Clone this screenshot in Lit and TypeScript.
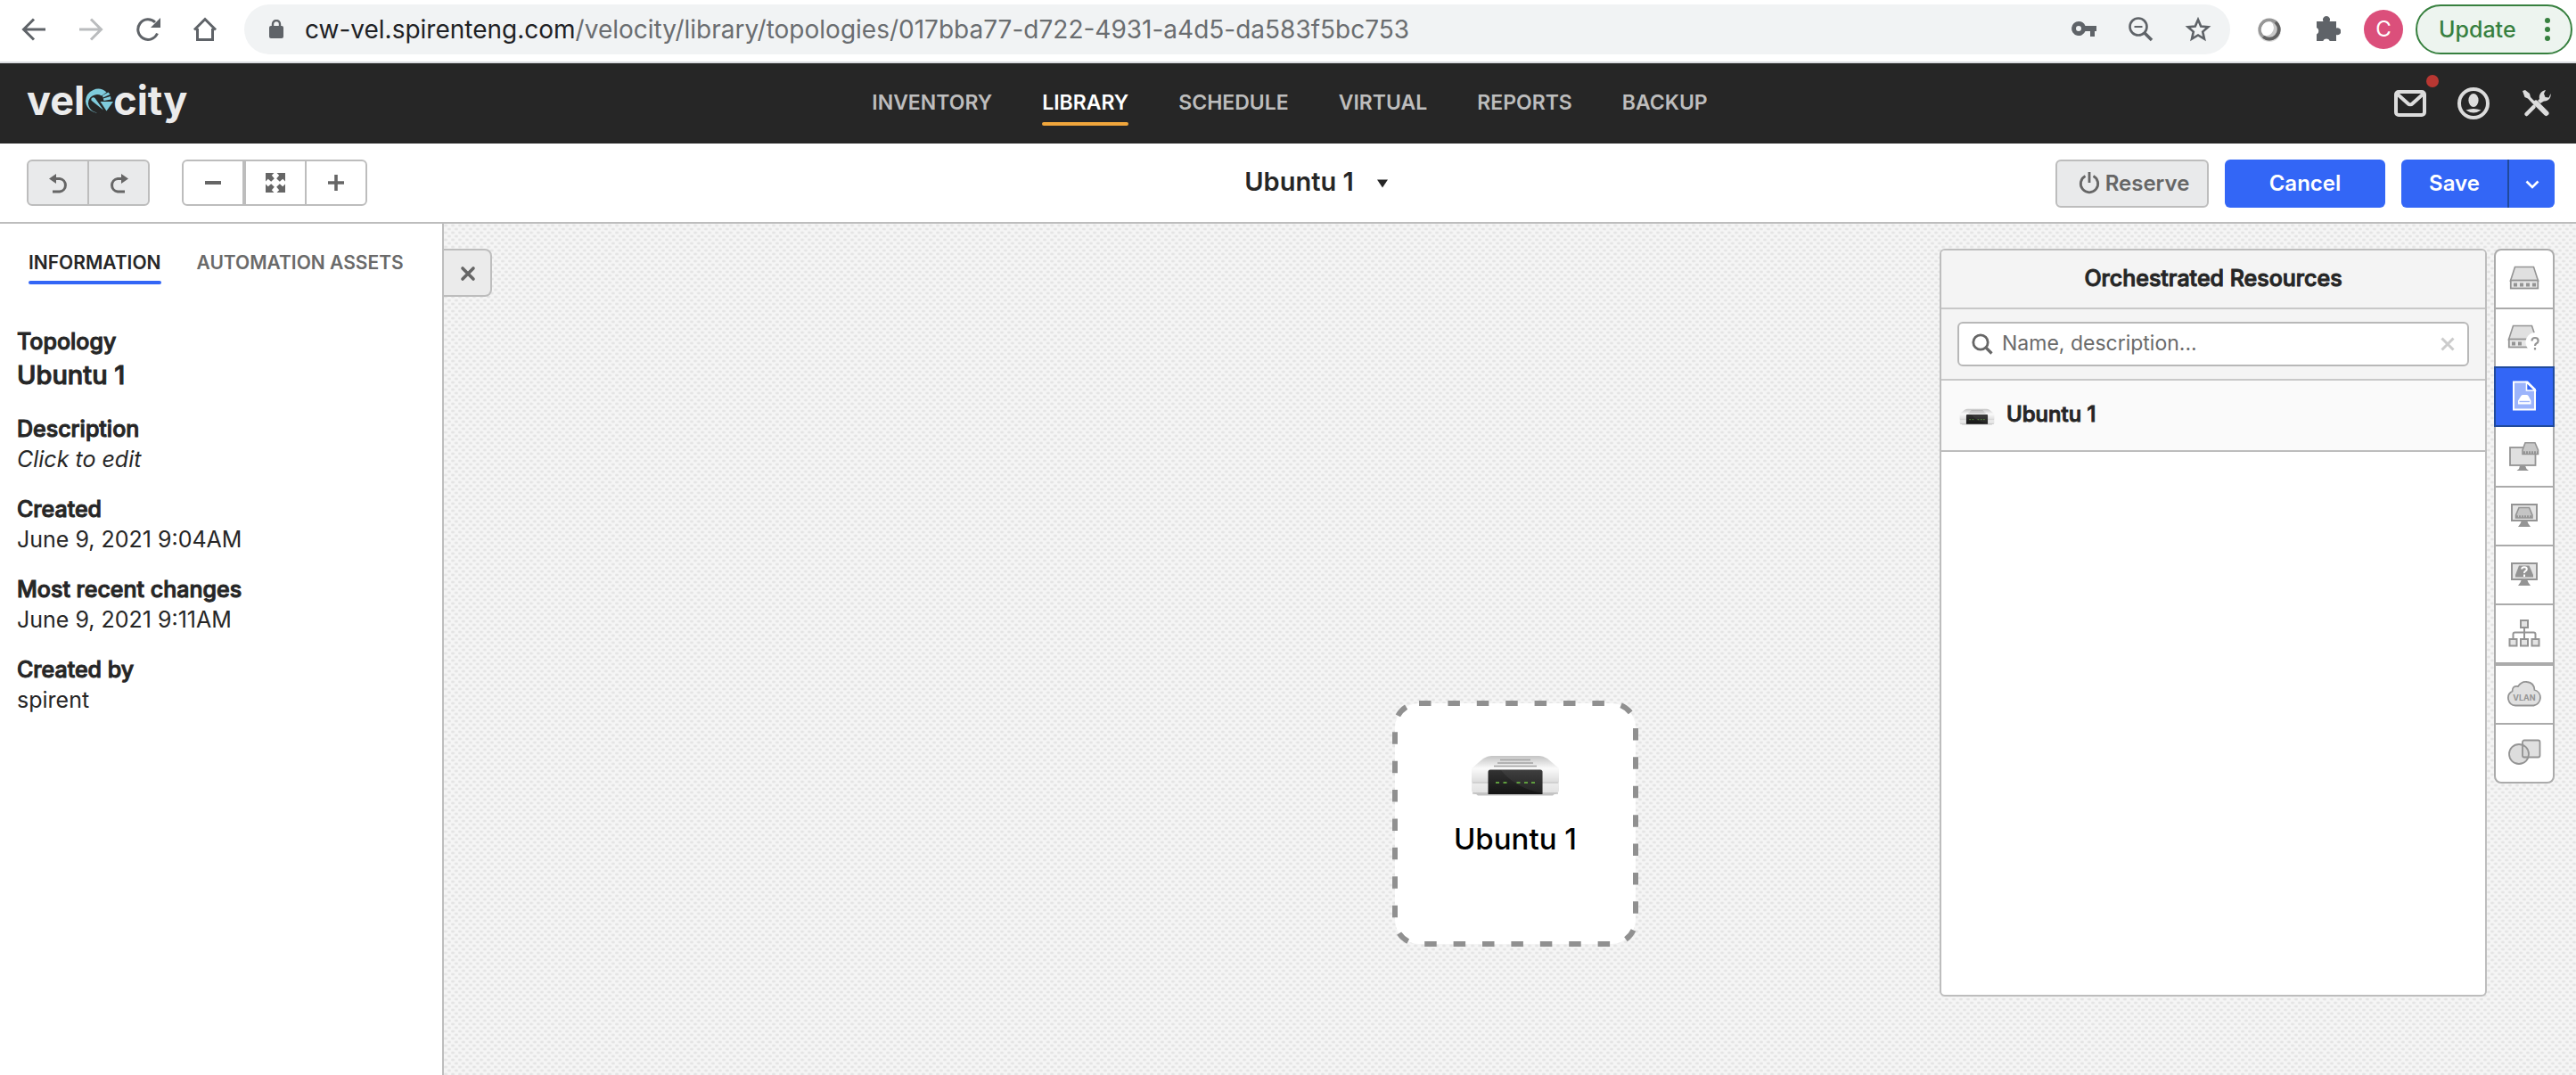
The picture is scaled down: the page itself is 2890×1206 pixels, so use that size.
import { LitElement, html, css, svg, TemplateResult } from "lit";
import { customElement, property, state } from "lit/decorators.js";
import { classMap } from "lit/directives/class-map.js";

const icon = (w: number, h: number, body: unknown) =>
  html`<svg width=${w} height=${h} viewBox="0 0 ${w} ${h}" fill="none" aria-hidden="true">${body}</svg>`;

const back = icon(28, 28, svg`<path d="M27 14H3M14 2.500L2.500 14 14 25.500" stroke="#5f6368" stroke-width="3"/>`);
const forward = icon(28, 28, svg`<path d="M1 14H25M14 2.500L25.500 14 14 25.500" stroke="#babcbe" stroke-width="3"/>`);
const reload = icon(28, 28, svg`<path d="M24.500 18.500A11.300 11.300 0 1 1 22 6" stroke="#5f6368" stroke-width="3"/><path d="M28 1V12H17z" fill="#5f6368"/>`);
const home = icon(28, 28, svg`<path d="M5.500 13V25.500H22.500V13M2 14.500L14 2.500 26 14.500" stroke="#5f6368" stroke-width="3"/>`);
const lock = icon(16, 22, svg`<rect y="7" width="16" height="14" rx="2" fill="#5f6368"/><path d="M4 8V5a4 4 0 0 1 8 0V8" stroke="#5f6368" stroke-width="2.400"/>`);
const key = icon(30, 30, svg`<path fill-rule="evenodd" fill="#5f6368" d="M9 6a8 8 0 1 0 7.500 11H22v6h5v-6h2v-6H16.500A8 8 0 0 0 9 6zm0 5a3 3 0 1 1 0 6 3 3 0 0 1 0-6z"/>`);
const zoomOut = icon(30, 30, svg`<circle cx="12" cy="12" r="9.500" stroke="#5f6368" stroke-width="2.600"/><path d="M7.500 12h9" stroke="#5f6368" stroke-width="2"/><path d="M18.500 18.500L27 27" stroke="#5f6368" stroke-width="3.600"/>`);
const star = icon(30, 30, svg`<path d="M15 4l3.200 7.500 8.100.700-6.100 5.400 1.800 8L15 21.400 8 25.600l1.800-8-6.100-5.400 8.100-.700z" stroke="#5f6368" stroke-width="2.600"/>`);
const orb = icon(28, 28, svg`<circle cx="14" cy="15" r="13" fill="#ddd"/><circle cx="14" cy="14" r="12.500" fill="#979797"/><path d="M14 26.500a12.500 12.500 0 0 0 8-22.100L6 23.500a12.500 12.500 0 0 0 8 3z" fill="#626262"/><circle cx="14" cy="14" r="8.800" fill="#c9c9c9"/><path d="M7 20A9 9 0 0 1 16 5.500 9 9 0 0 1 9 21z" fill="#fff"/>`);
const puzzle = icon(30, 30, svg`<path fill="#5f6368" d="M3 6h7.500a4 4 0 1 1 7 0H25v7.500a4 4 0 1 1 0 7.500v7h-7.200a4.200 4.200 0 0 0-7.600 0H3v-7.500a4.200 4.200 0 0 0 0-7.500z"/>`);
const dots = icon(6, 28, svg`<circle cx="3" cy="4" r="3" fill="#37803f"/><circle cx="3" cy="14" r="3" fill="#37803f"/><circle cx="3" cy="24" r="3" fill="#37803f"/>`);

const gauge = icon(32, 30, svg`
  <path d="M1 15.500A14 14 0 0 1 24.500 5.500L19 9.500A10 10 0 0 0 4 18.500a11.500 11.500 0 0 0 15 9.500A14 14 0 0 1 1 15.500z" fill="#7fcbdc"/>
  <path d="M20 9L26.500 5.500 28.500 8 20.500 11.500zM20.800 12.600L29 10l.500 3.500-8 1.500z" fill="#7fcbdc"/>
  <path d="M17.500 16H32L24.500 26.500z" fill="#7fcbdc"/>
  <path d="M7.500 12.500a2.600 2.600 0 0 1 4-.500L21 25.500 8.500 15.500a2.300 2.300 0 0 1-1-3z" fill="#7fcbdc"/>`);

const mail = icon(36, 36, svg`<rect x="2" y="5" width="32" height="26" rx="3" stroke="#dcdcdc" stroke-width="4"/><path d="M3 7L15.500 18.300a3.500 3.500 0 0 0 5 0L33 7" stroke="#dcdcdc" stroke-width="4"/>`);
const user = icon(36, 36, svg`<circle cx="18" cy="18" r="16" stroke="#dcdcdc" stroke-width="4"/><ellipse cx="18" cy="14.500" rx="5.600" ry="7.500" fill="#dcdcdc"/><path d="M9.500 25.500Q18 22.500 26.500 25.500 18 31.500 9.500 25.500z" fill="#dcdcdc"/>`);
const tools = icon(36, 36, svg`
  <path d="M2 4l3-1 5 4 1 4 7 7-2.500 2.500-7.500-8-3.500-1.500z" fill="#dcdcdc"/>
  <path d="M17 17.500L28.500 29" stroke="#dcdcdc" stroke-width="6" stroke-linecap="round"/>
  <path d="M14.500 22L6.500 30" stroke="#dcdcdc" stroke-width="4.500" stroke-linecap="round"/>
  <path d="M21 13c-1-5 2-9 7-10l-2 4 1.500 4 4 .500L33.500 7c1 5-3 9-7.500 8.500l-4 2.500-3-3z" fill="#dcdcdc"/>`);

const undo = icon(28, 28, svg`<path d="M7 9.500H16a7.300 7.300 0 0 1 0 14.500H8" stroke="#666" stroke-width="3"/><path d="M4 9.500L12 4v11z" fill="#666"/>`);
const redo = icon(28, 28, svg`<path d="M22 9.500H13a7.300 7.300 0 0 0 0 14.500H21" stroke="#666" stroke-width="3"/><path d="M25 9.500L17 4v11z" fill="#666"/>`);
const minus = icon(24, 24, svg`<path d="M3 12H21" stroke="#666" stroke-width="4"/>`);
const plus = icon(24, 24, svg`<path d="M3 12H21M12 3V21" stroke="#666" stroke-width="3.600"/>`);
const expand = icon(24, 24, svg`<path d="M1 1h9.500L7.800 3.800 10.800 7.200 7.200 10.800 3.800 7.800 1 10.500zM23 1v9.500l-2.800-2.700L16.800 10.800 13.200 7.200l3-3.400L13.500 1zM1 23v-9.500l2.800 2.700L7.200 13.200 10.800 16.800l-3 3.400L10.500 23zM23 23h-9.500l2.700-2.800-3-3.400 3.600-3.600 3.400 3L23 13.500z" fill="#666"/>`);
const caret = icon(14, 10, svg`<path d="M1 .500H13L7 9.500z" fill="#262626"/>`);
const power = icon(24, 26, svg`<path d="M7.500 5.500A9.700 9.700 0 1 0 16.500 5.500" stroke="#666" stroke-width="2.800"/><path d="M12 1V13" stroke="#666" stroke-width="2.800"/>`);
const chevron = icon(18, 12, svg`<path d="M2.500 2.500L9 9l6.500-6.500" stroke="#fff" stroke-width="2.600"/>`);
const cross = icon(18, 18, svg`<path d="M3 3L15 15M15 3L3 15" stroke="#666" stroke-width="3.600" stroke-linecap="round"/>`);
const clear = icon(16, 16, svg`<path d="M1.500 1.500L14.500 14.500M14.500 1.500L1.500 14.500" stroke="#ccc" stroke-width="3"/>`);
const search = icon(24, 24, svg`<circle cx="10" cy="10" r="8.200" stroke="#666" stroke-width="2.800"/><path d="M15.500 15.500L22.500 22.500" stroke="#666" stroke-width="3.200"/>`);

const G = "#949494";
const rackBody = svg`<path d="M6.500 2.500H27.500L32.500 18H1.500z" fill="#e0e0e0" stroke=${G} stroke-width="1.600"/><rect x="1.800" y="17.500" width="30.500" height="9" fill="#e6e6e6" stroke=${G} stroke-width="1.800"/>`;
const railIcons: { label: string; art: TemplateResult }[] = [
  { label: "Resources", art: icon(34, 34, svg`<g transform="translate(0 2)">${rackBody}<path d="M5 20.500h4v4H5zM12 20.500h4v4h-4zM19 20.500h4v4h-4zM26 20.500h4v4h-4z" fill=${G}/></g>`) },
  { label: "Abstract resources", art: icon(38, 34, svg`<g transform="translate(0 2)">${rackBody}<path d="M5 20.500h4v4H5zM12 20.500h4v4h-4z" fill=${G}/><circle cx="31.500" cy="21" r="11" fill="#fff"/><path d="M27.500 19.500q0-3.500 3.500-3.500 3.600 0 3.600 3.200 0 2-2 3-1.600.900-1.600 2.800M31 27v2.600" stroke=${G} stroke-width="2.200"/></g>`) },
  { label: "Orchestrated resources", art: icon(28, 34, svg`<path d="M2 1.500H17.500L26 10V32.500H2z" fill="#9cb4fb" stroke="#fff" stroke-width="2"/><path d="M16.500 2V11H26z" fill="#3366f6" stroke="#fff" stroke-width="1.600"/><path d="M7 22.500L10.500 17q.500-1 2-1h4q1.500 0 2 1L21.500 22.500V26.500H7z" fill="#fff"/><path d="M8.500 23.500H20" stroke="#9cb4fb" stroke-width="1.400"/>`) },
  { label: "Virtual resources", art: icon(36, 34, svg`<rect x="2" y="7" width="28.500" height="20" fill="#e0e0e0" stroke=${G} stroke-width="1.800"/><path d="M13 27.500h6l1.500 3.500 2.500 2H9.500l2.500-2z" fill=${G}/><path d="M19 1.800H30L33.500 10v4.500H16V10z" fill="#c8c8c8" stroke=${G} stroke-width="1.600"/><path d="M17 12.600H33" stroke=${G} stroke-width="2.600" stroke-dasharray="2 1"/>`) },
  { label: "Virtual machines", art: icon(32, 30, svg`<rect x="2" y="3" width="28" height="18" fill="#e4e4e4" stroke=${G} stroke-width="2"/><path d="M13 21h6l1.500 3.500L23 28H9l2.500-3.500z" fill=${G}/><path d="M10 6.500H21.500L25 15v3H6.500V15z" fill="#c4c4c4" stroke=${G} stroke-width="1.600"/><path d="M7 16.500H25" stroke=${G} stroke-width="2.400" stroke-dasharray="2 1"/>`) },
  { label: "Abstract virtual machines", art: icon(32, 30, svg`<rect x="2" y="3" width="28" height="18" fill="#e4e4e4" stroke=${G} stroke-width="2"/><path d="M13 21h6l1.500 3.500L23 28H9l2.500-3.500z" fill=${G}/><path d="M10 5.500H21.500L26 16v2.500H6V16z" fill=${G}/><path d="M13.200 9.500q0-2.300 2.800-2.300t2.800 2.300q0 1.300-1.500 2.200T16 14M16 15.500V18" stroke="#fff" stroke-width="2"/>`) },
  { label: "Networks", art: icon(36, 34, svg`<path d="M18 11V24M5.500 24V18.500Q5.500 16.500 7.500 16.500H28.500Q30.500 16.500 30.500 18.500V24" stroke=${G} stroke-width="2"/><path d="M14 3h8v8h-8zM1.500 24h8v7.500h-8zM14 24h8v7.500h-8zM26.500 24h8v7.500h-8z" fill="#e4e4e4" stroke=${G} stroke-width="2"/>`) },
  { label: "VLAN", art: icon(40, 30, svg`<path d="M10 28.500A8.500 8.500 0 0 1 6.500 12.500Q6.500 6 13 7 17 1 23 2q8 1 8.500 9a9 9 0 0 1-1 17.500z" fill="#e0e0e0" stroke=${G} stroke-width="1.800"/><text x="20" y="23" text-anchor="middle" font-family="Inter, sans-serif" font-size="9" font-weight="700" fill=${G}>VLAN</text>`) },
  { label: "Shapes", art: icon(38, 32, svg`<rect x="17" y="2.500" width="19.500" height="19" rx="2" fill="#e0e0e0" stroke=${G} stroke-width="1.800"/><circle cx="13" cy="18" r="11" fill="#d4d4d4" fill-opacity=".8" stroke=${G} stroke-width="1.800"/><path d="M17 8V19.500q0 2 2 2h4" stroke=${G} stroke-width="1.800"/>`) },
];

@customElement("device-image")
export class DeviceImage extends LitElement {
  @property({ type: Number }) width = 100;

  static styles = css`
    :host { display: block; }
    svg { display: block; }
  `;

  render() {
    return html`<svg width=${this.width} height=${Math.round(this.width * 0.48)} viewBox="0 0 100 48" aria-hidden="true">
      <defs>
        <linearGradient id="top" x1="0" y1="0" x2="0" y2="1"><stop offset="0" stop-color="#c4c4c4"/><stop offset="1" stop-color="#fafafa"/></linearGradient>
        <linearGradient id="body" x1="0" y1="0" x2="0" y2="1"><stop offset="0" stop-color="#fbfbfb"/><stop offset=".5" stop-color="#dedede"/><stop offset=".6" stop-color="#ececec"/><stop offset="1" stop-color="#e0e0e0"/></linearGradient>
        <linearGradient id="front" x1="0" y1="0" x2="0" y2="1"><stop offset="0" stop-color="#333"/><stop offset="1" stop-color="#141414"/></linearGradient>
      </defs>
      <path d="M5 44H95L92 46.500H8z" fill="#c2c2c2"/>
      <path d="M1 16L14 5Q19 2 23 2H77Q81 2 86 5L99 16z" fill="url(#top)"/>
      <path d="M1 16H99V41Q98 45 93 45H7Q2 45 1 41z" fill="url(#body)"/>
      <path d="M33 6.500H67M30 10H70M26 13.500H74" stroke="#a3a3a3" stroke-width="1.400"/>
      <path d="M2 32H98" stroke="#bcbcbc" stroke-width="1"/>
      <path d="M2 44H98" stroke="#a8a8a8" stroke-width="1"/>
      <path d="M19.500 45V20q0-2.500 2.500-2.500H78q2.500 0 2.500 2.500V45z" fill="url(#front)"/>
      <path d="M34 18H80V44Q50 38 34 18z" fill="#fff" fill-opacity=".06"/>
      <path d="M28 32h4M36.500 32h4M51.500 32h4M60 32h4M68 32h4" stroke="#5f9e3d" stroke-width="2.200"/>
    </svg>`;
  }
}

@customElement("browser-bar")
export class BrowserBar extends LitElement {
  static styles = css`
    :host {
      display: flex;
      align-items: center;
      box-sizing: border-box;
      height: 71px;
      padding: 0 4px 4px 24px;
      background: #fff;
      border-bottom: 2px solid #dadce0;
    }
    svg { display: block; }
    button { border: 0; padding: 0; background: none; font: inherit; color: inherit; }
    .nav { display: flex; gap: 36px; margin-right: 30px; }
    .address {
      flex: 1;
      display: flex;
      align-items: center;
      height: 56px;
      border-radius: 28px;
      background: #f1f3f4;
      padding: 0 21px 0 28px;
    }
    .url { flex: 1; margin-left: 24px; font-size: 28px; line-height: 36px; color: #6a6d70; white-space: nowrap; }
    .host { color: #202124; }
    .actions { display: flex; gap: 34px; }
    .extensions { display: flex; align-items: center; gap: 36px; margin: 0 26px 0 30px; }
    .avatar { width: 44px; height: 44px; border-radius: 50%; background: #db4f7b; color: #fff; font-size: 24px; margin-right: 14px; }
    .update {
      display: flex;
      align-items: center;
      justify-content: space-between;
      box-sizing: border-box;
      width: 176px;
      height: 56px;
      padding: 0 23px 0 24px;
      border: 2px solid #37803f;
      border-radius: 28px;
      background: #edf4ef;
      color: #37803f;
      font-size: 25px;
      font-weight: 500;
    }
  `;

  render() {
    return html`
      <div class="nav">
        <button aria-label="Back">${back}</button>
        <button aria-label="Forward">${forward}</button>
        <button aria-label="Reload">${reload}</button>
        <button aria-label="Home">${home}</button>
      </div>
      <div class="address">
        ${lock}
        <div class="url"><span class="host">cw-vel.spirenteng.com</span>/velocity/library/topologies/017bba77-d722-4931-a4d5-da583f5bc753</div>
        <div class="actions">
          <button aria-label="Passwords">${key}</button>
          <button aria-label="Zoom">${zoomOut}</button>
          <button aria-label="Bookmark">${star}</button>
        </div>
      </div>
      <div class="extensions">
        <button aria-label="Extension">${orb}</button>
        <button aria-label="Extensions">${puzzle}</button>
      </div>
      <button class="avatar" aria-label="Profile">C</button>
      <button class="update">Update ${dots}</button>
    `;
  }
}

@customElement("app-header")
export class AppHeader extends LitElement {
  @property() active = "LIBRARY";

  static styles = css`
    :host {
      display: grid;
      grid-template-columns: 1fr auto 1fr;
      box-sizing: border-box;
      height: 90px;
      padding: 0 26px 0 30px;
      background: #262626;
    }
    svg { display: block; }
    .logo { display: flex; align-items: center; height: 84px; font-size: 45px; font-weight: 700; line-height: 84px; color: #ebebeb; text-decoration: none; }
    .nav { display: flex; align-items: flex-start; gap: 56px; padding-top: 30px; }
    .link { position: relative; font-size: 23px; line-height: 28px; font-weight: 600; color: #bdbdbd; text-decoration: none; }
    .link.on { color: #fff; }
    .link.on::after { content: ""; position: absolute; left: 0; right: 0; top: 36px; height: 4px; border-radius: 2px; background: #f0a63c; }
    .tools { display: flex; align-items: center; justify-content: flex-end; gap: 35px; }
    button { position: relative; border: 0; padding: 0; background: none; }
    .dot { position: absolute; right: -14px; top: -14px; width: 14px; height: 14px; border-radius: 50%; background: #b93732; }
  `;

  render() {
    return html`
      <a class="logo" href="#" aria-label="velocity"><span>vel</span>${gauge}<span>city</span></a>
      <nav class="nav">
        ${["INVENTORY", "LIBRARY", "SCHEDULE", "VIRTUAL", "REPORTS", "BACKUP"].map(
          (t) => html`<a href="#" class=${classMap({ link: true, on: t === this.active })}>${t}</a>`
        )}
      </nav>
      <div class="tools">
        <button aria-label="Messages">${mail}<span class="dot"></span></button>
        <button aria-label="Account">${user}</button>
        <button aria-label="Settings">${tools}</button>
      </div>
    `;
  }
}

@customElement("editor-toolbar")
export class EditorToolbar extends LitElement {
  @property() name = "";

  static styles = css`
    :host {
      display: grid;
      grid-template-columns: 1fr auto 1fr;
      align-items: start;
      box-sizing: border-box;
      height: 90px;
      padding: 18px 24px 0 30px;
      background: #fff;
      border-bottom: 2px solid #bdbdbd;
    }
    svg { display: block; }
    button { display: flex; align-items: center; justify-content: center; box-sizing: border-box; border: 0; padding: 0; background: none; font: inherit; color: inherit; }
    .left { display: flex; gap: 36px; }
    .group { display: flex; box-sizing: border-box; height: 52px; border: 2px solid #bdbdbd; border-radius: 6px; overflow: hidden; }
    .group button { width: 68px; height: 100%; border-left: 2px solid #bdbdbd; }
    .group button:first-child { border-left: 0; width: 66px; }
    .group .fit { width: 70px; border-left-width: 4px; }
    .group.muted { background: #e9eaeb; }
    .title { gap: 25px; padding-left: 58px; height: 48px; font-size: 29px; font-weight: 600; color: #262626; }
    .title svg { margin-top: 6px; }
    .right { display: flex; justify-content: flex-end; gap: 18px; font-size: 24px; font-weight: 600; }
    .right button { height: 54px; padding-bottom: 2px; }
    .reserve { width: 172px; gap: 6px; border: 2px solid #bdbdbd; border-radius: 6px; background: #e9eaeb; color: #666; }
    .right .reserve { padding-left: 4px; }
    .cancel { width: 180px; border-radius: 6px; background: #3366f6; color: #fff; }
    .split { display: flex; color: #fff; border-radius: 6px; overflow: hidden; background: #3366f6; }
    .save { width: 119px; }
    .more { width: 53px; border-left: 2px solid #204a9c; }
    .more svg { margin-top: 4px; }
  `;

  render() {
    return html`
      <div class="left">
        <div class="group muted">
          <button aria-label="Undo" disabled>${undo}</button>
          <button aria-label="Redo" disabled>${redo}</button>
        </div>
        <div class="group">
          <button aria-label="Zoom out">${minus}</button>
          <button class="fit" aria-label="Fit">${expand}</button>
          <button aria-label="Zoom in">${plus}</button>
        </div>
      </div>
      <button class="title">${this.name} ${caret}</button>
      <div class="right">
        <button class="reserve" disabled>${power} Reserve</button>
        <button class="cancel">Cancel</button>
        <div class="split">
          <button class="save">Save</button>
          <button class="more" aria-label="More save options">${chevron}</button>
        </div>
      </div>
    `;
  }
}

@customElement("info-sidebar")
export class InfoSidebar extends LitElement {
  @state() private tab = 0;

  static styles = css`
    :host { display: block; box-sizing: border-box; width: 498px; padding-top: 30px; background: #fff; border-right: 2px solid #bdbdbd; color: #262626; }
    .tabs { display: flex; gap: 40px; padding-left: 32px; margin-bottom: 48px; }
    .tab { position: relative; border: 0; padding: 0 0 10px; background: none; font: 600 21px/28px Inter, sans-serif; color: #6a6a6a; white-space: nowrap; }
    .tab.on { color: #262626; }
    .tab.on::after { content: ""; position: absolute; left: 0; right: 0; bottom: 0; height: 4px; border-radius: 2px; background: #3366f6; }
    .list { display: flex; flex-direction: column; gap: 22px; margin: 0; padding: 0 19px; font-size: 25px; }
    dt { line-height: 32px; font-weight: 500; -webkit-text-stroke: 1px currentColor; }
    dd { margin: 0; line-height: 36px; }
    .name { font-size: 29px; line-height: 44px; font-weight: 500; -webkit-text-stroke: 1px currentColor; }
    .hint { font-style: italic; }
  `;

  render() {
    const rows = [
      ["Topology", "Ubuntu 1", "name"],
      ["Description", "Click to edit", "hint"],
      ["Created", "June 9, 2021 9:04AM", ""],
      ["Most recent changes", "June 9, 2021 9:11AM", ""],
      ["Created by", "spirent", ""],
    ];
    return html`
      <div class="tabs" role="tablist">
        ${["INFORMATION", "AUTOMATION ASSETS"].map(
          (t, i) => html`<button role="tab" aria-selected=${i === this.tab} class=${classMap({ tab: true, on: i === this.tab })} @click=${() => (this.tab = i)}>${t}</button>`
        )}
      </div>
      <dl class="list">
        ${rows.map(([k, v, c]) => html`<div><dt>${k}</dt><dd class=${c}>${v}</dd></div>`)}
      </dl>
    `;
  }
}

@customElement("resource-panel")
export class ResourcePanel extends LitElement {
  static styles = css`
    :host { display: block; box-sizing: border-box; width: 614px; border: 2px solid #bdbdbd; border-radius: 6px; overflow: hidden; background: #fff; color: #262626; }
    svg { display: block; flex: none; }
    h2 { margin: 0; height: 64px; border-bottom: 2px solid #c8c8c8; background: #f4f4f4; text-align: center; font-size: 25px; line-height: 62px; font-weight: 500; -webkit-text-stroke: 1px currentColor; }
    .filter { padding: 14px 18px; border-bottom: 2px solid #c8c8c8; background: #f4f4f4; }
    .box { display: flex; align-items: center; box-sizing: border-box; height: 50px; padding: 0 14px; border: 2px solid #b8b8b8; border-radius: 6px; background: #fff; }
    input { flex: 1; min-width: 0; margin-left: 10px; border: 0; padding: 0 0 2px; outline: 0; background: none; font: 23px/30px Inter, sans-serif; color: #262626; }
    input::placeholder { color: #6a6a6a; opacity: 1; }
    .clear { border: 0; padding: 0; background: none; }
    ul { margin: 0; padding: 0; list-style: none; }
    li { display: flex; align-items: center; gap: 13px; box-sizing: border-box; height: 80px; padding: 0 0 4px 20px; border-bottom: 2px solid #bdbdbd; background: #fafafa; font-size: 24px; font-weight: 500; -webkit-text-stroke: 1px currentColor; }
    device-image { padding-top: 6px; }
  `;

  render() {
    return html`
      <h2>Orchestrated Resources</h2>
      <div class="filter">
        <div class="box">
          ${search}
          <input type="text" aria-label="Filter resources" placeholder="Name, description..." />
          <button class="clear" aria-label="Clear">${clear}</button>
        </div>
      </div>
      <ul>
        <li><device-image width="40"></device-image>Ubuntu 1</li>
      </ul>
    `;
  }
}

@customElement("tool-rail")
export class ToolRail extends LitElement {
  @state() private active = 2;

  static styles = css`
    :host { display: flex; flex-direction: column; box-sizing: border-box; width: 68px; border: 2px solid #ababab; border-radius: 8px; background: #fff; }
    svg { display: block; }
    button { display: flex; align-items: center; justify-content: center; box-sizing: border-box; height: 66px; padding: 0 0 2px; border: 0; border-bottom: 2px solid #ababab; background: none; }
    button:last-child { border-bottom: 0; height: 64px; }
    .group-end { height: 68px; border-bottom-width: 4px; }
    .on { height: 68px; margin: -2px -2px 2px; border: 2px solid #204a9c; background: #3366f6; }
  `;

  render() {
    return html`${railIcons.map(
      (r, i) => html`<button
        aria-label=${r.label}
        class=${classMap({ on: i === this.active, "group-end": i === 6 })}
        @click=${() => (this.active = i)}
      >${r.art}</button>`
    )}`;
  }
}

@customElement("topology-canvas")
export class TopologyCanvas extends LitElement {
  static styles = css`
    :host {
      position: relative;
      display: flex;
      align-items: flex-start;
      gap: 8px;
      flex: 1;
      box-sizing: border-box;
      padding: 28px 24px 88px 0;
      background:
        radial-gradient(ellipse 3px 2px at 2px 2px, #e4e4e4 40%, transparent) 0 0 / 8px 8px,
        radial-gradient(ellipse 3px 2px at 6px 6px, #e4e4e4 40%, transparent) 0 0 / 8px 8px,
        #f5f5f5;
    }
    svg { display: block; }
    .close { display: flex; align-items: center; justify-content: center; box-sizing: border-box; width: 54px; height: 54px; margin-right: auto; padding: 2px 0 0 2px; border: 2px solid #bdbdbd; border-left: 0; border-radius: 0 8px 8px 0; background: #ebebeb; }
    resource-panel { align-self: stretch; }
    .node { position: absolute; left: 1064px; top: 535px; display: grid; width: 276px; height: 276px; }
    .frame, .content { grid-area: 1 / 1; }
    .content { display: flex; flex-direction: column; align-items: center; padding-top: 60px; gap: 26px; font-size: 33px; line-height: 42px; font-weight: 500; color: #000; }
  `;

  render() {
    return html`
      <div class="node">
        <svg class="frame" width="276" height="276" viewBox="0 0 276 276" aria-hidden="true">
          <rect x="3" y="3" width="270" height="270" rx="27" fill="#fff" stroke="#909090" stroke-width="6" stroke-dasharray="13.500 18.900"/>
        </svg>
        <div class="content">
          <device-image width="100"></device-image>
          <span>Ubuntu 1</span>
        </div>
      </div>
      <button class="close" aria-label="Close sidebar">${cross}</button>
      <resource-panel></resource-panel>
      <tool-rail></tool-rail>
    `;
  }
}

@customElement("app-root")
export class AppRoot extends LitElement {
  static styles = css`
    :host { display: flex; flex-direction: column; min-height: 100vh; font-family: Inter, "Liberation Sans", sans-serif; background: #fff; }
    .work { display: flex; flex: 1; }
  `;

  render() {
    return html`
      <browser-bar></browser-bar>
      <app-header></app-header>
      <editor-toolbar name="Ubuntu 1"></editor-toolbar>
      <main class="work">
        <info-sidebar></info-sidebar>
        <topology-canvas></topology-canvas>
      </main>
    `;
  }
}
